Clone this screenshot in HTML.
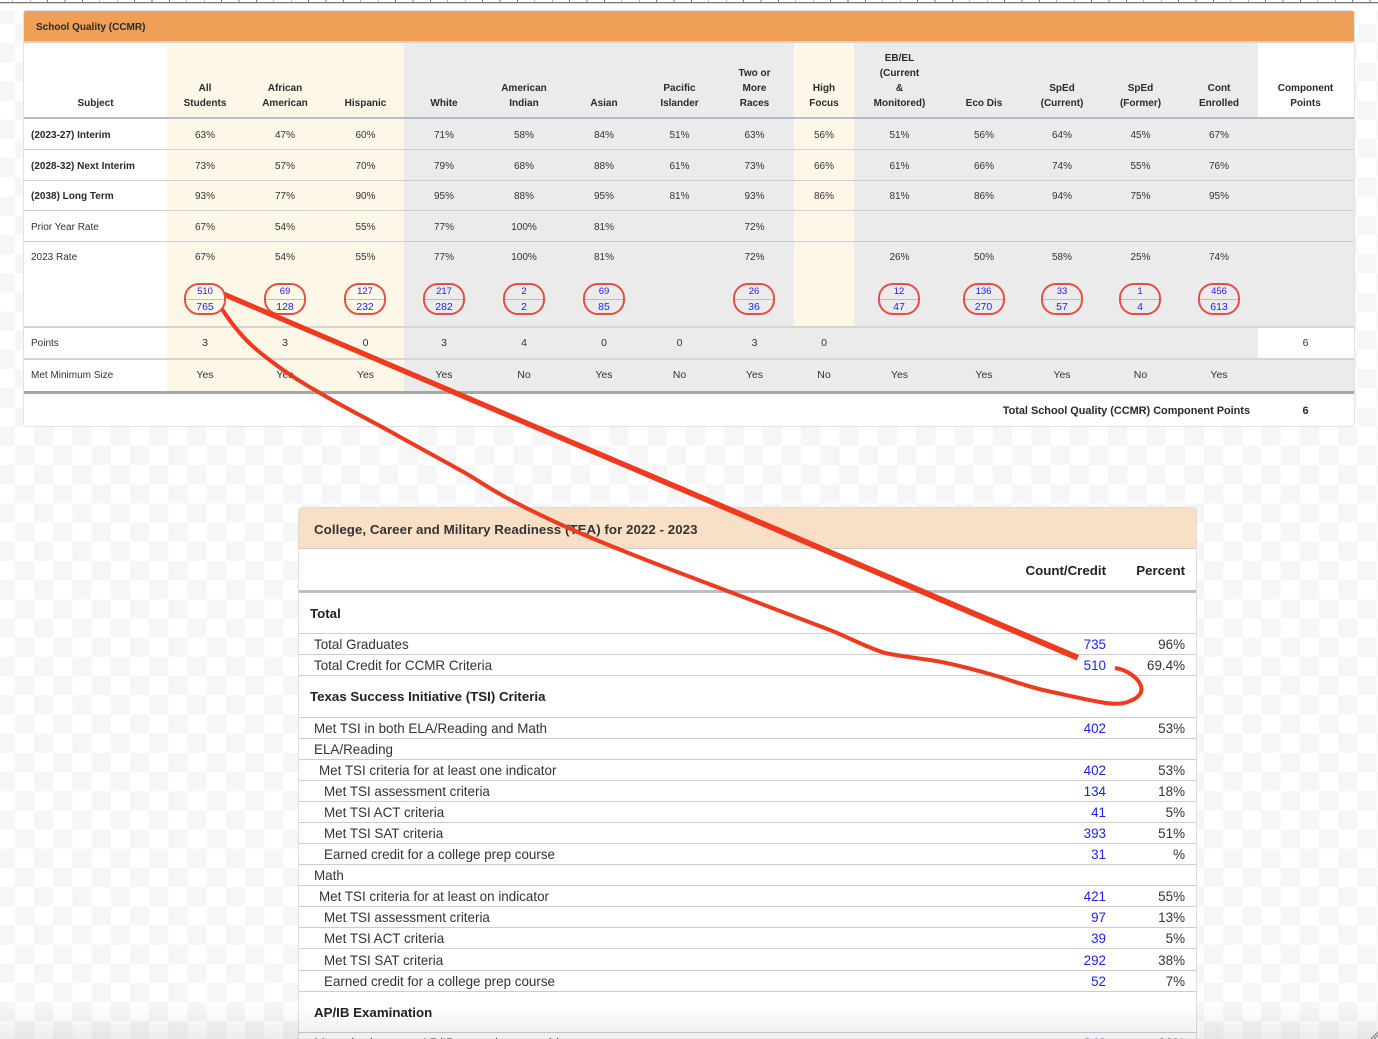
<!DOCTYPE html>
<html><head><meta charset="utf-8"><title>School Quality</title>
<style>
html,body{margin:0;padding:0;width:1378px;height:1039px;overflow:hidden}
body{position:relative;font-family:"Liberation Sans",Arial,sans-serif;color:#333;background-color:#fff;background-image:repeating-conic-gradient(#f6f6f6 0 25%,#fff 0 50%);background-size:38.36px 38.36px;background-position:14.82px 4.68px}
.wrap{position:absolute;left:0;top:0;width:1378px;height:1039px;overflow:hidden;filter:blur(.3px)}
.ruler{position:absolute;left:0;top:0;width:1378px;height:4px;background:#fff;}
.ruler i{position:absolute;left:0;top:0;width:100%;height:2px;background:repeating-linear-gradient(90deg,transparent 0 12.4px,#777 12.4px 13.2px,transparent 13.2px 17.4px)}
.ruler b{position:absolute;left:0;top:2px;width:100%;height:1px;background:#777}
.ruler u{position:absolute;left:0;top:3px;width:100%;height:1px;background:#d5d9d5}
.strip{position:absolute;left:0;top:4px;width:1378px;height:7px;background:#fff}
.card1{position:absolute;left:23px;top:10px;width:1330px;height:415px;border:1px solid #e2e2e2;border-radius:3px;background:#fff;overflow:hidden}
.h1{height:30px;background:#ef9f56;border-bottom:2px solid #d8d3c8;box-sizing:content-box;font:bold 10px/33px "Liberation Sans",sans-serif;padding-left:12px;color:#2a2a2a}
table{border-collapse:separate;border-spacing:0;table-layout:fixed}
.t1{width:1330px;font-size:10px}
.t1 td,.t1 th{box-sizing:border-box;text-align:center;padding:2px 0 0;border-bottom:1px solid #cbced5;line-height:15px;overflow:hidden;white-space:nowrap}
.t1 th{vertical-align:bottom;padding:0 0 6px;height:76px;border-bottom:2px solid #b8bcc8;font-weight:bold;color:#2a2a2a}
.t1 td:last-child,.t1 th:last-child{padding-right:1px}
.t1 td:first-child{text-align:left;padding-left:7px}
.y{background:#fcf7e6}.g{background:#ebebeb}
.t1 .b{font-weight:bold;color:#2a2a2a}
.t1 tr.rate td{vertical-align:top;padding-top:8px;border-bottom:2px solid #d5d5d8}
.t1 tr.big td{font-size:10.5px;padding-top:1px}
.t1 tr.big td:first-child{font-size:10px}
.t1 tr.pts td{border-bottom:2px solid #d5d5d8}
.t1 tr.met td{border-bottom:3px solid #a6a6a6;padding-top:0}
.o{width:42px;height:32px;box-sizing:border-box;margin:18px auto 0;border:2px solid #e44f45;border-radius:15px;color:#2222ee;position:relative;line-height:14px}
.o.l{left:-.5px}
.o span{display:block;height:13.500px;font-size:9.5px;line-height:13px}
.o span+span{border-top:1px solid #bdbdbd;font-size:10.5px;height:14px;line-height:15px}
.foot{position:absolute;top:383px;left:0;width:1330px;height:31px;font:bold 10.9px/34px "Liberation Sans",sans-serif;color:#2a2a2a}
.foot .a{position:absolute;right:104px;top:0}
.foot .c{position:absolute;left:1234px;width:95px;text-align:center;top:0}
.card2{position:absolute;left:298px;top:507px;width:897px;height:560px;border:1px solid #dedede;border-radius:4px 4px 0 0;background:#fff;overflow:hidden}
.h2{height:41px;background:#f8dfc6;box-sizing:border-box;border-bottom:1px solid #c9ccd2;font:bold 13.3px/44px "Liberation Sans",sans-serif;padding-left:15px;letter-spacing:.05px;color:#333}
.t2{width:897px;font-size:13.42px}
.t2 td,.t2 th{box-sizing:border-box;padding:2px 0 0;border-bottom:1px solid #c9ccd2;line-height:18px;height:21px;white-space:nowrap;overflow:hidden}
.t2 th{font-weight:bold;font-size:13.3px;text-align:right;height:44px;padding-top:3px;border-bottom:3px solid #b9bec8;color:#222}
.t2 td.n{text-align:right;color:#2222ee;padding-right:0}
.t2 td.p{text-align:right;padding-right:11px}
.t2 td.s{font-weight:bold;font-size:13.3px;height:42px;color:#222;padding-top:1px}
.p1{padding-left:15px!important}.p2{padding-left:20px!important}.p3{padding-left:25px!important}.p0{padding-left:11px!important}
svg.ann{position:absolute;left:0;top:0;width:1378px;height:1039px;pointer-events:none}
.fade{position:absolute;left:0;top:1005px;width:1378px;height:34px;background:linear-gradient(rgba(0,0,0,0),rgba(0,0,0,.065))}
</style></head><body>
<div class="wrap">
<div class="ruler"><i></i><b></b><u></u></div><div class="strip"></div>

<div class="card1">
<div class="h1">School Quality (CCMR)</div>
<table class="t1">
<colgroup><col style="width:143px"><col style="width:76px"><col style="width:84px"><col style="width:77px"><col style="width:80px"><col style="width:80px"><col style="width:80px"><col style="width:71px"><col style="width:79px"><col style="width:60px"><col style="width:91px"><col style="width:78px"><col style="width:78px"><col style="width:79px"><col style="width:78px"><col style="width:96px"></colgroup>
<tr><th>Subject</th><th class="y">All<br>Students</th><th class="y">African<br>American</th><th class="y">Hispanic</th><th class="g">White</th><th class="g">American<br>Indian</th><th class="g">Asian</th><th class="g">Pacific<br>Islander</th><th class="g">Two or<br>More<br>Races</th><th class="y">High<br>Focus</th><th class="g">EB/EL<br>(Current<br>&amp;<br>Monitored)</th><th class="g">Eco Dis</th><th class="g">SpEd<br>(Current)</th><th class="g">SpEd<br>(Former)</th><th class="g">Cont<br>Enrolled</th><th>Component<br>Points</th></tr>
<tr style="height:31px"><td class="b">(2023-27) Interim</td><td class="y">63%</td><td class="y">47%</td><td class="y">60%</td><td class="g">71%</td><td class="g">58%</td><td class="g">84%</td><td class="g">51%</td><td class="g">63%</td><td class="y">56%</td><td class="g">51%</td><td class="g">56%</td><td class="g">64%</td><td class="g">45%</td><td class="g">67%</td><td class="g"></td></tr>
<tr style="height:31px"><td class="b">(2028-32) Next Interim</td><td class="y">73%</td><td class="y">57%</td><td class="y">70%</td><td class="g">79%</td><td class="g">68%</td><td class="g">88%</td><td class="g">61%</td><td class="g">73%</td><td class="y">66%</td><td class="g">61%</td><td class="g">66%</td><td class="g">74%</td><td class="g">55%</td><td class="g">76%</td><td class="g"></td></tr>
<tr style="height:30px"><td class="b">(2038) Long Term</td><td class="y">93%</td><td class="y">77%</td><td class="y">90%</td><td class="g">95%</td><td class="g">88%</td><td class="g">95%</td><td class="g">81%</td><td class="g">93%</td><td class="y">86%</td><td class="g">81%</td><td class="g">86%</td><td class="g">94%</td><td class="g">75%</td><td class="g">95%</td><td class="g"></td></tr>
<tr style="height:31px"><td>Prior Year Rate</td><td class="y">67%</td><td class="y">54%</td><td class="y">55%</td><td class="g">77%</td><td class="g">100%</td><td class="g">81%</td><td class="g"></td><td class="g">72%</td><td class="y"></td><td class="g"></td><td class="g"></td><td class="g"></td><td class="g"></td><td class="g"></td><td class="g"></td></tr>
<tr class="rate" style="height:86px"><td>2023 Rate</td>
<td class="y">67%<div class="o"><span>510</span><span>765</span></div></td>
<td class="y">54%<div class="o"><span>69</span><span>128</span></div></td>
<td class="y">55%<div class="o l"><span>127</span><span>232</span></div></td>
<td class="g">77%<div class="o"><span>217</span><span>282</span></div></td>
<td class="g">100%<div class="o"><span>2</span><span>2</span></div></td>
<td class="g">81%<div class="o"><span>69</span><span>85</span></div></td>
<td class="g"></td>
<td class="g">72%<div class="o l"><span>26</span><span>36</span></div></td>
<td class="y"></td>
<td class="g">26%<div class="o l"><span>12</span><span>47</span></div></td>
<td class="g">50%<div class="o l"><span>136</span><span>270</span></div></td>
<td class="g">58%<div class="o"><span>33</span><span>57</span></div></td>
<td class="g">25%<div class="o l"><span>1</span><span>4</span></div></td>
<td class="g">74%<div class="o"><span>456</span><span>613</span></div></td>
<td class="g"></td></tr>
<tr class="big pts" style="height:32px"><td>Points</td><td class="y">3</td><td class="y">3</td><td class="y">0</td><td class="g">3</td><td class="g">4</td><td class="g">0</td><td class="g">0</td><td class="g">3</td><td class="g">0</td><td class="g"></td><td class="g"></td><td class="g"></td><td class="g"></td><td class="g"></td><td>6</td></tr>
<tr class="big met" style="height:34px"><td>Met Minimum Size</td><td class="y">Yes</td><td class="y">Yes</td><td class="y">Yes</td><td class="g">Yes</td><td class="g">No</td><td class="g">Yes</td><td class="g">No</td><td class="g">Yes</td><td class="g">No</td><td class="g">Yes</td><td class="g">Yes</td><td class="g">Yes</td><td class="g">No</td><td class="g">Yes</td><td class="g"></td></tr>
</table>
<div class="foot"><span class="a">Total School Quality (CCMR) Component Points</span><span class="c">6</span></div>
</div>

<div class="card2">
<div class="h2">College, Career and Military Readiness (TEA) for 2022 - 2023</div>
<table class="t2">
<colgroup><col style="width:699px"><col style="width:108px"><col style="width:90px"></colgroup>
<tr><th></th><th>Count/Credit</th><th style="padding-right:11px">Percent</th></tr>
<tr><td class="s p0" style="height:41px">Total</td><td class="n"></td><td class="p"></td></tr>
<tr><td class="p1">Total Graduates</td><td class="n">735</td><td class="p">96%</td></tr>
<tr><td class="p1">Total Credit for CCMR Criteria</td><td class="n">510</td><td class="p">69.4%</td></tr>
<tr><td class="s p0">Texas Success Initiative (TSI) Criteria</td><td class="n"></td><td class="p"></td></tr>
<tr><td class="p1">Met TSI in both ELA/Reading and Math</td><td class="n">402</td><td class="p">53%</td></tr>
<tr><td class="p1">ELA/Reading</td><td class="n"></td><td class="p"></td></tr>
<tr><td class="p2">Met TSI criteria for at least one indicator</td><td class="n">402</td><td class="p">53%</td></tr>
<tr><td class="p3">Met TSI assessment criteria</td><td class="n">134</td><td class="p">18%</td></tr>
<tr><td class="p3">Met TSI ACT criteria</td><td class="n">41</td><td class="p">5%</td></tr>
<tr><td class="p3">Met TSI SAT criteria</td><td class="n">393</td><td class="p">51%</td></tr>
<tr><td class="p3">Earned credit for a college prep course</td><td class="n">31</td><td class="p">%</td></tr>
<tr><td class="p1">Math</td><td class="n"></td><td class="p"></td></tr>
<tr><td class="p2">Met TSI criteria for at least on indicator</td><td class="n">421</td><td class="p">55%</td></tr>
<tr><td class="p3">Met TSI assessment criteria</td><td class="n">97</td><td class="p">13%</td></tr>
<tr><td class="p3">Met TSI ACT criteria</td><td class="n">39</td><td class="p">5%</td></tr>
<tr><td class="p3" style="height:22px">Met TSI SAT criteria</td><td class="n">292</td><td class="p">38%</td></tr>
<tr><td class="p3">Earned credit for a college prep course</td><td class="n">52</td><td class="p">7%</td></tr>
<tr><td class="s p1" style="height:41px">AP/IB Examination</td><td class="n"></td><td class="p"></td></tr>
<tr><td class="p1">Met criteria on an AP/IB exam in any subject</td><td class="n">242</td><td class="p">32%</td></tr>
</table>
</div>

<svg class="ann" viewBox="0 0 1378 1039" fill="none">
<path d="M224 291.5 L1079 655 L1076.500 660.500 L226 298 Z" fill="#ee3a1f"/>
<path d="M222 309 C236 331 252 347 267 358 C285 372 302 383 320 393 C345 408 372 421 400 437 C420 448 442 460 460 470 C471 476 482 483.500 493 490 C520 506 550 520 580 533 C612 547 646 560 680 573 C730 592 780 611 830 630 C850 638 868 648 885 653 C900 656 915 658 930 660 C955 664 980 671 1000 677 C1015 682 1030 687 1043 690 C1062 694 1082 699 1100 702 C1110 704 1122 705 1130 701 C1138 698 1143 693 1141 686 C1138 678 1128 670 1115 668" stroke="#ee3a1f" stroke-width="4" stroke-linecap="butt"/>
</svg>
<div class="fade"></div>
<svg style="position:absolute;left:1370px;top:1031px" width="8" height="8" viewBox="0 0 8 8" fill="none" stroke="#777" stroke-width="1"><path d="M1 8L8 1M4 8L8 4"/></svg>
</div>
</body></html>
